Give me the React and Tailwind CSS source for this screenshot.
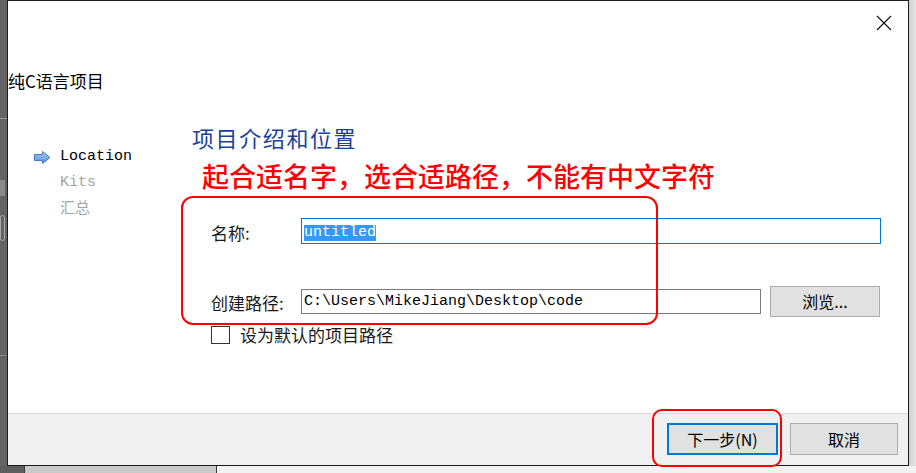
import { useState } from "react";

const CJK = { fontFamily: '"Noto Sans CJK SC", "Noto Sans", sans-serif' };
const MONO = { fontFamily: '"Liberation Mono", "Noto Sans CJK SC", monospace' };

function NavArrow() {
  return (
    <svg width="17" height="13" viewBox="0 0 17 13">
      <defs>
        <linearGradient id="arr" x1="0" y1="0" x2="0" y2="1">
          <stop offset="0" stopColor="#a9cdf5" />
          <stop offset="1" stopColor="#4f8fdd" />
        </linearGradient>
      </defs>
      <polygon
        points="0.5,3.5 8.5,3.5 8.5,0.5 16,6.5 8.5,12.5 8.5,9.5 0.5,9.5"
        fill="url(#arr)"
        stroke="#3f78c4"
        strokeWidth="1"
      />
    </svg>
  );
}

export default function App() {
  const [name, setName] = useState("untitled");
  const [asDefault, setAsDefault] = useState(false);

  return (
    <div className="relative w-[916px] h-[473px] overflow-hidden bg-[#636363]">
      {/* desktop behind the dialog */}
      <div className="absolute left-0 top-[466px] w-[916px] h-[7px] flex">
        <div className="w-[24px] bg-[#5e5e5e]" />
        <div className="w-[193px] bg-[#c9c9c9] border-l border-r border-[#3a3a3a]" />
        <div className="flex-1 bg-[#f2f2f2]" />
      </div>
      <div className="absolute left-[909px] top-0 w-[7px] h-[466px] bg-gradient-to-r from-[#cfcfcf] to-[#e6e6e6]" />
      <div className="absolute left-0 top-[118px] w-[7px] h-[1px] bg-[#9a9a9a]" />
      <div className="absolute left-0 top-[180px] w-[5px] h-[16px] bg-[#8a8a8a]" />
      <div className="absolute left-0 top-[215px] w-[5px] h-[26px] border border-[#aaaaaa] rounded-sm" />
      <div className="absolute left-0 top-[355px] w-[7px] h-[1px] bg-[#8a8a8a]" />

      {/* dialog window */}
      <div className="absolute left-[7px] top-0 w-[902px] h-[466px] border border-[#1c1c1c] bg-white flex flex-col">
        <div className="h-[68px] flex justify-end items-start pt-[14px] pr-[16px]">
          <svg width="16" height="16" viewBox="0 0 16 16">
            <path d="M1 1 L15 15 M15 1 L1 15" stroke="#111" strokeWidth="1.2" />
          </svg>
        </div>

        <div className="h-[24px] leading-[24px] text-[17px] text-black" style={CJK}>
          纯C语言项目
        </div>

        <div className="flex-1 flex">
          {/* wizard steps */}
          <div className="w-[184px] pl-[26px] pt-[51px] text-[15px]" style={MONO}>
            <div className="h-[26px] flex items-center gap-[9px] text-black">
              <NavArrow />
              <span>Location</span>
            </div>
            <div className="h-[27px] flex items-center pl-[26px] text-[#a3a3a3]">Kits</div>
            <div className="h-[26px] flex items-center pl-[26px] text-[#a3a3a3]">汇总</div>
          </div>

          {/* page content */}
          <div className="flex-1 pt-[29px]" style={CJK}>
            <div className="h-[30px] leading-[30px] text-[22px] tracking-[1.6px] text-[#1d3f9c]">
              项目介绍和位置
            </div>
            <div className="mt-[7px] ml-[10px] h-[34px] leading-[34px] text-[27px] font-medium text-[#ff0000]">
              起合适名字，选合适路径，不能有中文字符
            </div>

            <div className="relative mt-[23px]">
              <div className="flex items-center pl-[19px] pt-[1px]">
                <span className="w-[90px] text-[17px] text-[#1a1a1a] pt-[3px]">名称:</span>
                <div className="w-[580px] h-[26px] border border-[#0078d7] flex items-end pb-[2px] pl-[2px]">
                  <span className="bg-[#3399ff] text-white text-[15px] leading-[16px]" style={MONO}>
                    {name}
                  </span>
                  <input
                    className="hidden"
                    value={name}
                    onChange={(e) => setName(e.target.value)}
                  />
                </div>
              </div>

              <div className="mt-[40px] h-[31px] flex items-center pl-[19px]">
                <span className="w-[90px] text-[17px] text-[#1a1a1a] pt-[3px]">创建路径:</span>
                <div
                  className="w-[460px] h-[25px] border border-[#7a7a7a] flex items-center pl-[2px] pt-[3px] text-[15px] text-black"
                  style={MONO}
                >
                  C:\Users\MikeJiang\Desktop\code
                </div>
                <button className="ml-[9px] w-[110px] h-[31px] bg-[#e1e1e1] border border-[#adadad] text-[16px] text-black">
                  浏览...
                </button>
              </div>

              <label className="mt-[9px] h-[18px] flex items-center pl-[19px] gap-[10px] cursor-pointer">
                <span
                  className="w-[19px] h-[18px] border border-[#333333] bg-white"
                  onClick={() => setAsDefault(!asDefault)}
                />
                <span className="text-[17px] text-[#1a1a1a]">设为默认的项目路径</span>
              </label>

              {/* annotation frame */}
              <div className="absolute left-[-11px] top-[-20px] w-[477px] h-[129px] border-2 border-[#ff0000] rounded-[12px] pointer-events-none" />
            </div>
          </div>
        </div>

        <div className="relative h-[52px] border-t border-[#dcdcdc] bg-[#f0f0f0] flex justify-end items-start pt-[9px] pr-[10px] gap-[12px]" style={CJK}>
          <button className="w-[111px] h-[32px] bg-[#e1e1e1] border-2 border-[#0078d7] text-[16px] text-black">
            下一步(N)
          </button>
          <button className="w-[108px] h-[32px] bg-[#e1e1e1] border border-[#adadad] text-[16px] text-black">
            取消
          </button>
          <div className="absolute left-[644px] top-[-5px] w-[130px] h-[58px] border-2 border-[#ff0000] rounded-[10px] pointer-events-none" />
        </div>
      </div>
    </div>
  );
}
